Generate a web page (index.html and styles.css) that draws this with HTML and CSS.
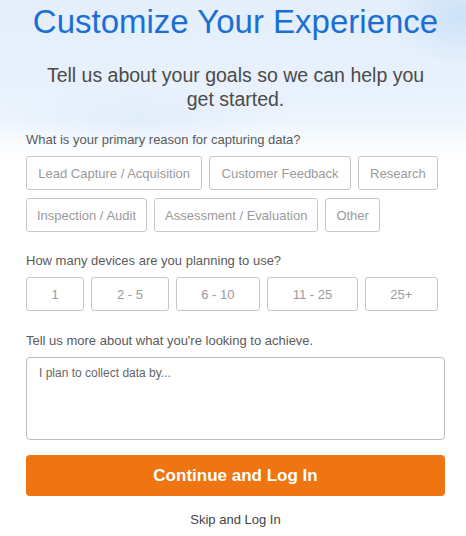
FILE: index.html
```html
<!DOCTYPE html>
<html lang="en">
<head>
<meta charset="utf-8">
<title>Customize Your Experience</title>
<link rel="stylesheet" href="styles.css">
</head>
<body>
<div class="wash"></div>
<main class="page">
  <h1 class="title">Customize Your Experience</h1>
  <p class="subtitle">Tell us about your goals so we can help you get started.</p>

  <section class="question q1">
    <div class="label">What is your primary reason for capturing data?</div>
    <div class="chip-row fill">
      <button class="chip">Lead Capture / Acquisition</button>
      <button class="chip">Customer Feedback</button>
      <button class="chip">Research</button>
    </div>
    <div class="chip-row">
      <button class="chip">Inspection / Audit</button>
      <button class="chip">Assessment / Evaluation</button>
      <button class="chip">Other</button>
    </div>
  </section>

  <section class="question q2">
    <div class="label">How many devices are you planning to use?</div>
    <div class="chip-row fill">
      <button class="chip device">1</button>
      <button class="chip device">2 - 5</button>
      <button class="chip device">6 - 10</button>
      <button class="chip device">11 - 25</button>
      <button class="chip device">25+</button>
    </div>
  </section>

  <section class="question q3">
    <div class="label">Tell us more about what you're looking to achieve.</div>
    <textarea class="notes" placeholder="I plan to collect data by..."></textarea>
  </section>

  <button class="primary">Continue and Log In</button>
  <div class="skip">Skip and Log In</div>
</main>
</body>
</html>
```

FILE: styles.css
```css
html, body {
  margin: 0;
  padding: 0;
  background: #fff;
}

body {
  font-family: "Liberation Sans", Arial, Helvetica, sans-serif;
  position: relative;
  width: 466px;
  height: 536px;
  overflow: hidden;
}

.wash {
  position: absolute;
  left: 0;
  top: 0;
  width: 466px;
  height: 165px;
  background:
    radial-gradient(ellipse 70px 50px at 460px 15px, rgba(190, 216, 245, 0.6), rgba(190, 216, 245, 0) 100%),
    radial-gradient(ellipse 150px 30px at 140px 118px, rgba(220, 234, 250, 0.7), rgba(220, 234, 250, 0) 100%),
    linear-gradient(to bottom, #e4effb 0px, #e8f1fc 95px, #eef5fd 120px, #f7fbff 140px, rgba(255,255,255,0) 162px);
  z-index: 0;
}

.page {
  position: relative;
  z-index: 1;
  padding: 0 21px 0 26px;
}

.title {
  margin: 3px 0 0;
  font-size: 33px;
  line-height: 37px;
  font-weight: normal;
  color: #1b6fd4;
  text-align: center;
  white-space: nowrap;
}

.subtitle {
  margin: 23px 0 0;
  font-size: 19.5px;
  line-height: 24px;
  color: #4b4b4b;
  text-align: center;
  padding: 0 18px;
}

.question.q1 { margin-top: 21px; }
.question.q2 { margin-top: 21px; }
.question.q3 { margin-top: 22px; }

.label {
  font-size: 13px;
  line-height: 16px;
  color: #5a5a5a;
  margin-bottom: 8px;
}

.chip-row {
  display: flex;
}

.chip-row + .chip-row {
  margin-top: 8px;
}

.chip {
  box-sizing: border-box;
  height: 34px;
  margin: 0 7px 0 0;
  padding: 0 10px;
  border: 1px solid #c6c6c6;
  border-radius: 3px;
  background: #fff;
  font-family: "Liberation Sans", Arial, Helvetica, sans-serif;
  font-size: 13px;
  color: #9a9a9a;
  white-space: nowrap;
}

.chip-row.fill .chip {
  flex: 1 1 auto;
}

.device {
  padding: 0;
}

.notes {
  display: block;
  box-sizing: border-box;
  width: 100%;
  height: 83px;
  margin: 0;
  padding: 8px 12px;
  border: 1px solid #bdbdbd;
  border-radius: 4px;
  resize: none;
  background: #fff;
  font-family: "Liberation Sans", Arial, Helvetica, sans-serif;
  font-size: 12px;
  line-height: 14px;
  color: #444;
}

.notes::placeholder {
  color: #666;
  opacity: 1;
}

.primary {
  display: block;
  box-sizing: border-box;
  width: 100%;
  height: 41px;
  margin: 15px 0 0;
  border: none;
  border-radius: 4px;
  background: #ee7512;
  color: #fff;
  font-family: "Liberation Sans", Arial, Helvetica, sans-serif;
  font-size: 17px;
  font-weight: bold;
}

.skip {
  margin-top: 16px;
  text-align: center;
  font-size: 13px;
  line-height: 16px;
  color: #444;
}
```
